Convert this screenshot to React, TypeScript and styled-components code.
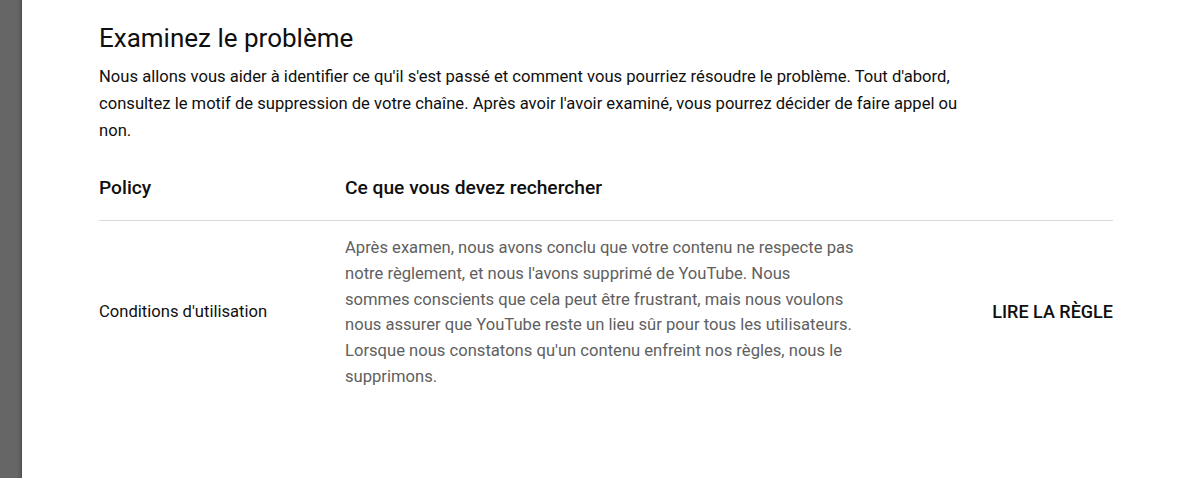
import React from 'react';
import styled, { createGlobalStyle } from 'styled-components';

const GlobalStyle = createGlobalStyle`
  html, body {
    margin: 0;
    padding: 0;
    background: #fff;
    font-family: Roboto, "Noto Sans", Arial, sans-serif;
  }
`;

const Page = styled.div`
  display: flex;
  min-height: 478px;
  height: 478px;
  overflow: hidden;
`;

const SideBar = styled.div`
  width: 22px;
  flex-shrink: 0;
  background: linear-gradient(to right, #666 0, #666 17px, #5a5a5a 21px, #444 22px);
`;

const Content = styled.main`
  flex: 1;
  padding: 22px 87px 0 77px;
  color: #0f0f0f;
`;

const Title = styled.h2`
  margin: 0;
  font-size: 26px;
  font-weight: 400;
  line-height: 32px;
`;

const Intro = styled.p`
  margin: 8.5px 0 0;
  max-width: 880px;
  font-size: 16.6px;
  line-height: 27px;
`;

const Table = styled.div`
  margin-top: 31.5px;
`;

const Row = styled.div<{ $header?: boolean }>`
  display: grid;
  grid-template-columns: 246px 1fr auto;
  align-items: center;
  border-bottom: ${({ $header }) => ($header ? '1px solid #d9d9d9' : 'none')};
  padding: ${({ $header }) => ($header ? '0 0 19px' : '14px 0')};
`;

const HeadCell = styled.div`
  font-size: 19.2px;
  font-weight: 500;
  line-height: 26px;
`;

const PolicyName = styled.div`
  font-size: 16.6px;
  line-height: 24px;
`;

const Description = styled.div`
  max-width: 512px;
  font-size: 16.6px;
  line-height: 25.8px;
  color: #606060;
`;

const ReadLink = styled.a`
  font-size: 18px;
  font-weight: 500;
  line-height: 24px;
  color: #0f0f0f;
  text-decoration: none;
  text-transform: uppercase;
  cursor: pointer;
`;

export default function App() {
  return (
    <>
      <GlobalStyle />
      <Page>
        <SideBar />
        <Content>
          <Title>Examinez le problème</Title>
          <Intro>
            Nous allons vous aider à identifier ce qu'il s'est passé et comment vous pourriez résoudre le
            problème. Tout d'abord, consultez le motif de suppression de votre chaîne. Après avoir l'avoir
            examiné, vous pourrez décider de faire appel ou non.
          </Intro>
          <Table>
            <Row $header>
              <HeadCell>Policy</HeadCell>
              <HeadCell>Ce que vous devez rechercher</HeadCell>
              <span />
            </Row>
            <Row>
              <PolicyName>Conditions d'utilisation</PolicyName>
              <Description>
                Après examen, nous avons conclu que votre contenu ne respecte pas notre règlement, et nous
                l'avons supprimé de YouTube. Nous sommes conscients que cela peut être frustrant, mais nous
                voulons nous assurer que YouTube reste un lieu sûr pour tous les utilisateurs. Lorsque nous
                constatons qu'un contenu enfreint nos règles, nous le supprimons.
              </Description>
              <ReadLink>Lire la règle</ReadLink>
            </Row>
          </Table>
        </Content>
      </Page>
    </>
  );
}
